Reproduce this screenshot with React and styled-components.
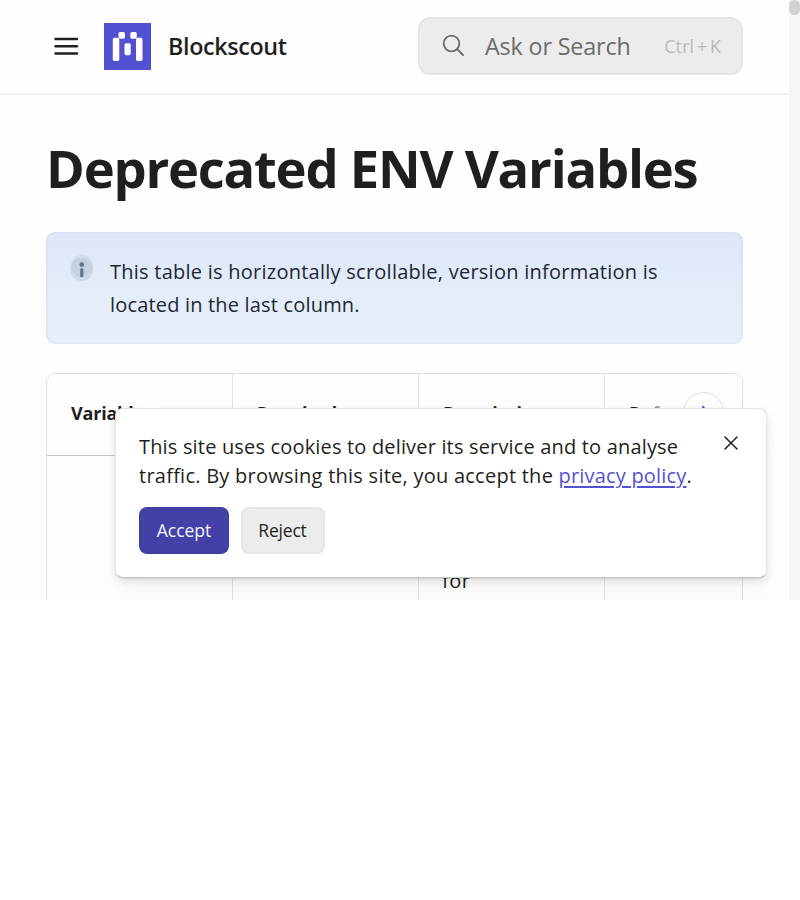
import React from "react";
import styled, { createGlobalStyle } from "styled-components";

const Global = createGlobalStyle`
  * { box-sizing: border-box; }
  body { margin: 0; background: #fff; color: #1f1f20; font-family: "Open Sans", "Noto Sans", sans-serif; overflow: hidden; }
`;

const Viewport = styled.div`
  position: relative;
  width: 800px;
  height: 600px;
  overflow: hidden;
  display: flex;
  background: #fefefe;
`;

const Page = styled.div`
  width: 789px;
  flex: none;
`;

const Scrollbar = styled.div`
  width: 11px;
  height: 600px;
  background: #f5f5f5;
`;

const Thumb = styled.div`
  height: 15px;
  border-radius: 6px;
  background: #d1d1d1;
`;

const Header = styled.header`
  height: 95px;
  border-bottom: 2px solid #f3f3f3;
  padding: 17px 46px 0;
  display: flex;
  align-items: flex-start;
`;

const MenuIcon = styled.svg`
  width: 26px;
  height: 20px;
  margin: 20px 24px 0 8px;
  flex: none;
`;

const Logo = styled.svg`
  width: 47px;
  height: 47px;
  margin: 6px 17px 0 0;
  flex: none;
`;

const Brand = styled.div`
  font-size: 23.3px;
  font-weight: 600;
  line-height: 32px;
  margin-top: 13px;
  letter-spacing: -0.35px;
  white-space: nowrap;
`;

const Search = styled.div`
  width: 325px;
  height: 58px;
  margin-left: auto;
  border: 2px solid #e6e6e6;
  border-radius: 12px;
  background: #ececec;
  display: flex;
  align-items: center;
  padding: 0 20px 0 22px;
  color: #6b6b6b;
`;

const SearchIcon = styled.svg`
  width: 24px;
  height: 24px;
  margin-right: 19px;
  flex: none;
`;

const Placeholder = styled.span`
  font-size: 23.3px;
  line-height: 32px;
  letter-spacing: -0.15px;
  white-space: nowrap;
`;

const Shortcut = styled.span`
  margin-left: auto;
  font-size: 17.8px;
  letter-spacing: 0.2px;
  color: #b9b9b9;
  word-spacing: -2.2px;
  white-space: nowrap;
`;

const Main = styled.main`
  padding: 0 46px;
`;

const Title = styled.h1`
  margin: 37px 0 0;
  font-size: 52.5px;
  line-height: 72px;
  font-weight: 700;
  letter-spacing: -1.23px;
  white-space: nowrap;
`;

const Hint = styled.div`
  height: 112px;
  margin-top: 28px;
  border: 2px solid rgba(190, 200, 215, 0.2);
  border-radius: 9px;
  background: linear-gradient(#dde7f7, #e9f0fb) border-box;
  display: flex;
  padding: 20px 22px;
  color: #1d2733;
`;

const InfoIcon = styled.svg`
  width: 24px;
  height: 28px;
  margin-right: 16px;
  flex: none;
`;

const HintText = styled.div`
  margin-top: 1px;
`;

const HintLine = styled.p`
  margin: 0;
  font-size: 20px;
  line-height: 33px;
  letter-spacing: ${(p) => p.$tracking};
  white-space: nowrap;
`;

const Table = styled.div`
  height: 400px;
  margin-top: 29px;
  border: 1px solid #e0e0e1;
  border-radius: 9px;
  overflow: hidden;
  display: grid;
  grid-template: 82px 1fr / 186px 186px 186px 1fr;
`;

const HeadCell = styled.div`
  position: relative;
  border-right: ${(p) => (p.$last ? "0" : "1px solid #e3e3e6")};
  border-bottom: 1px solid #c6c6c6;
  padding: 24px 24px;
  font-size: 18px;
  letter-spacing: -0.2px;
  font-weight: 700;
  line-height: 30px;
  white-space: nowrap;
  overflow: hidden;
`;

const Cell = styled.div`
  border-right: ${(p) => (p.$last ? "0" : "1px solid #e3e3e6")};
  padding: 108px 24px 0 23px;
  font-size: 20px;
  line-height: 33px;
  letter-spacing: 0.5px;
`;

const Fade = styled.div`
  position: absolute;
  inset: 0 0 0 32px;
  background: linear-gradient(90deg, rgba(254, 254, 254, 0), #fefefe 36px);
`;

const ScrollNext = styled.div`
  position: absolute;
  top: 18px;
  right: 18px;
  width: 41px;
  height: 41px;
  border: 1px solid #dedee2;
  border-radius: 50%;
  background: #fefefe;
  display: grid;
  place-items: center;
  color: #5351d2;
`;

const Banner = styled.section`
  position: absolute;
  left: 115px;
  top: 408px;
  width: 652px;
  height: 170px;
  border: 1px solid #e4e4e4;
  border-bottom-color: #c4c4c4;
  border-radius: 8px;
  background: #fff;
  box-shadow: 0 1px 1px rgba(0, 0, 0, 0.08), 0 4px 8px rgba(0, 0, 0, 0.09), 0 14px 34px rgba(0, 0, 0, 0.04);
  padding: 23px 23px 0;
`;

const BannerLine = styled.p`
  margin: 0;
  font-size: 20px;
  line-height: 29px;
  letter-spacing: ${(p) => p.$tracking};
  white-space: nowrap;
`;

const Link = styled.a`
  color: #5552d2;
  letter-spacing: 0.19px;
  text-decoration: underline;
  text-decoration-thickness: 2px;
  text-underline-offset: 3px;
  text-decoration-skip-ink: auto;
`;

const Close = styled.svg`
  position: absolute;
  top: 26px;
  right: 27.5px;
  width: 16px;
  height: 16px;
`;

const Actions = styled.div`
  display: flex;
  gap: 12px;
  margin-top: 17px;
`;

const Button = styled.button`
  width: ${(p) => (p.$primary ? "90px" : "84px")};
  height: 47px;
  padding: 0 ${(p) => (p.$primary ? "0" : "1px")} 1px 0;
  border: 2px solid ${(p) => (p.$primary ? "#403fa4" : "#e6e6e6")};
  border-radius: 8px;
  background: ${(p) => (p.$primary ? "#4341a7" : "#ececec")};
  color: ${(p) => (p.$primary ? "#f4f4ff" : "#1f1f20")};
  font: 400 17.5px/24px "Open Sans", sans-serif;
  letter-spacing: ${(p) => (p.$primary ? "0" : "-0.2px")};
`;

export default function App() {
  return (
    <>
      <Global />
      <Viewport>
        <Page>
          <Header>
            <MenuIcon viewBox="0 0 26 20" stroke="#1f1f20" strokeWidth="2.4" strokeLinecap="round">
              <path d="M1.5 2H23M1.5 9.3H23M1.5 16.5H23" />
            </MenuIcon>
            <Logo viewBox="0 0 47 47">
              <path fill="#5351d2" d="M0 0h47v47H0z" />
              <g fill="#fefefe">
                <rect x="14.5" y="9" width="6.5" height="6.8" rx="1.7" />
                <rect x="26.3" y="9" width="6.5" height="6.8" rx="1.7" />
                <rect x="8.8" y="14.8" width="6.5" height="23.2" rx="1.7" />
                <rect x="32" y="14.8" width="6.5" height="23.2" rx="1.7" />
                <rect x="20.5" y="20.3" width="6.2" height="12" rx="1.7" />
              </g>
            </Logo>
            <Brand>Blockscout</Brand>
            <Search>
              <SearchIcon viewBox="0 0 24 24" fill="none" stroke="currentColor" strokeWidth="1.8">
                <circle cx="9.5" cy="9.5" r="7.8" />
                <path d="m15.2 15.2 5.8 5.8" strokeLinecap="round" />
              </SearchIcon>
              <Placeholder>Ask or Search</Placeholder>
              <Shortcut>Ctrl + K</Shortcut>
            </Search>
          </Header>
          <Main>
            <Title>Deprecated ENV Variables</Title>
            <Hint>
              <InfoIcon viewBox="0 0 24 28">
                <circle cx="11.8" cy="11.8" r="11" fill="#9aaabd" opacity=".2" />
                <circle cx="11.8" cy="15.5" r="11.5" fill="#9aaabd" opacity=".25" />
                <circle cx="11.8" cy="10.7" r="2.4" fill="#64748f" />
                <rect x="10.2" y="14.2" width="3.2" height="9" rx="1.3" fill="#64748f" />
              </InfoIcon>
              <HintText>
                <HintLine $tracking="0.25px">
                  This table is horizontally scrollable, version information is
                </HintLine>
                <HintLine $tracking="0.18px">located in the last column.</HintLine>
              </HintText>
            </Hint>
            <Table>
              <HeadCell>Variable</HeadCell>
              <HeadCell>Required</HeadCell>
              <HeadCell>Description</HeadCell>
              <HeadCell $last>
                Default
                <Fade />
                <ScrollNext>
                  <svg width="10" height="14" viewBox="0 0 10 14" fill="none" stroke="currentColor" strokeWidth="2" strokeLinecap="round">
                    <path d="m4 .8 5 6-5 6" />
                  </svg>
                </ScrollNext>
              </HeadCell>
              <Cell />
              <Cell />
              <Cell>for</Cell>
              <Cell $last />
            </Table>
          </Main>
        </Page>
        <Scrollbar>
          <Thumb />
        </Scrollbar>
        <Banner>
          <BannerLine $tracking="0.17px">This site uses cookies to deliver its service and to analyse</BannerLine>
          <BannerLine $tracking="0.25px">
            traffic. By browsing this site, you accept the <Link>privacy policy</Link>.
          </BannerLine>
          <Close viewBox="0 0 16 16" stroke="#1f1f20" strokeWidth="1.5" strokeLinecap="round">
            <path d="m2 2 12 12M14 2 2 14" />
          </Close>
          <Actions>
            <Button $primary>Accept</Button>
            <Button>Reject</Button>
          </Actions>
        </Banner>
      </Viewport>
    </>
  );
}
